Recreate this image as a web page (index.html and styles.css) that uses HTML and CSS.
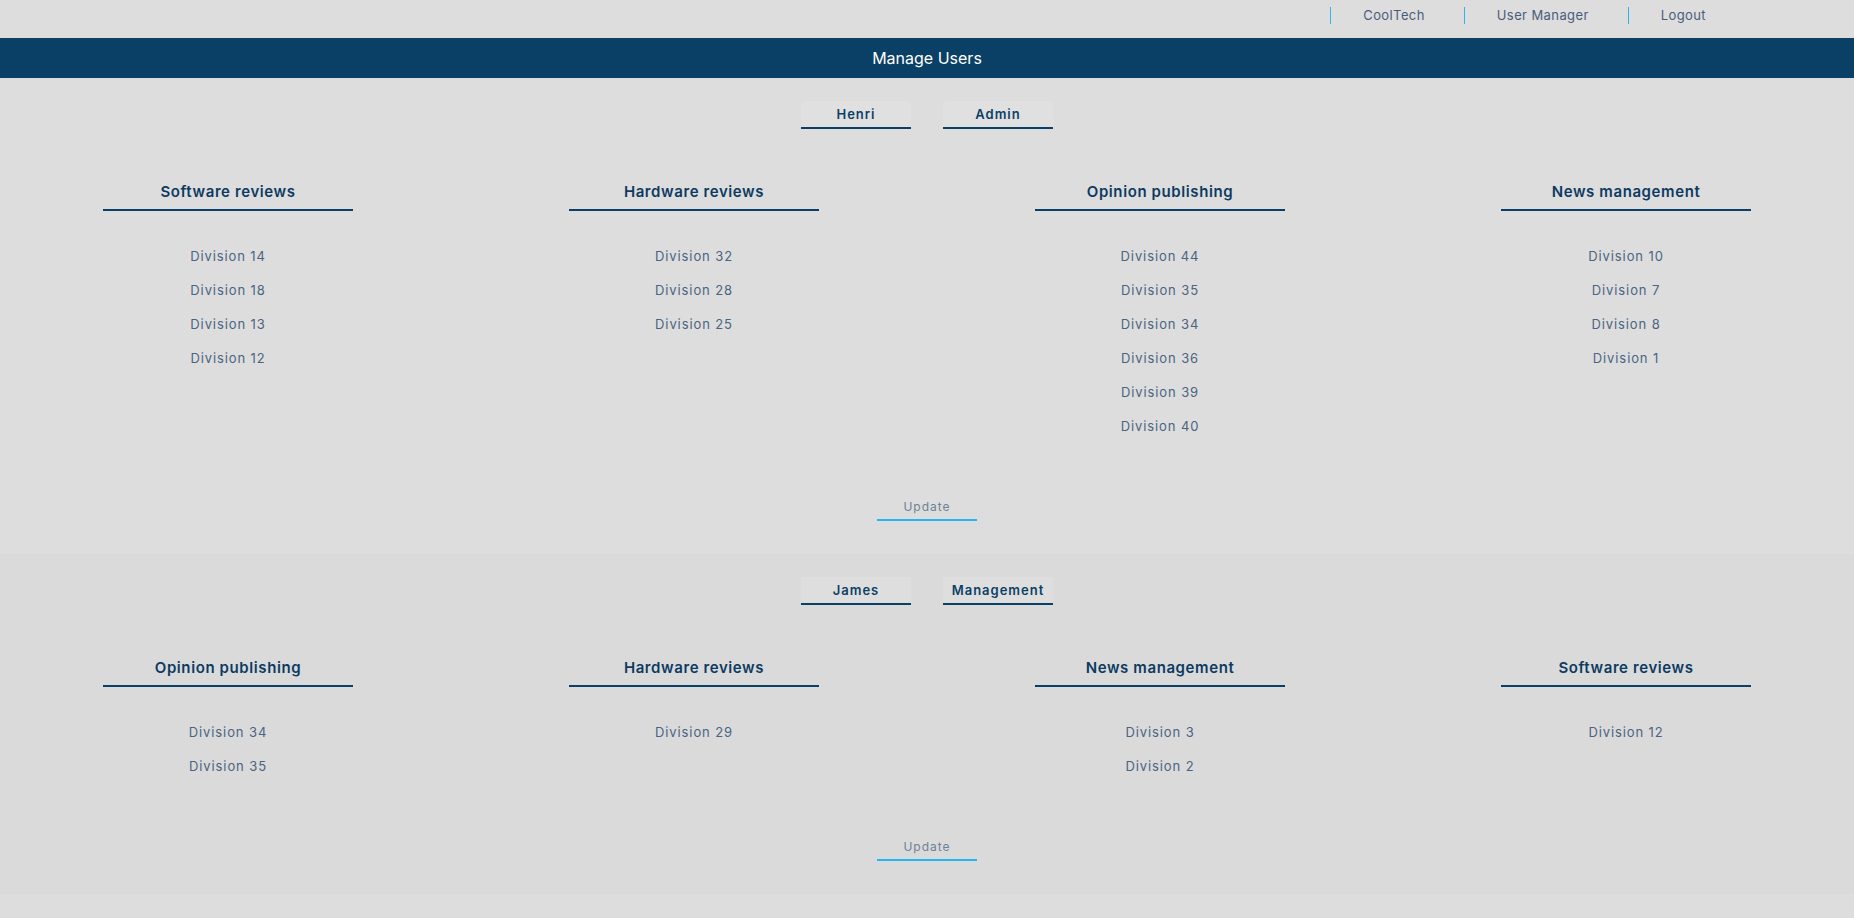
FILE: index.html
```html
<!DOCTYPE html>
<html lang="en">
<head>
<meta charset="utf-8">
<title>Manage Users</title>
<link rel="stylesheet" href="styles.css">
</head>
<body>
<nav class="topnav">
  <a class="nav-item">CoolTech</a>
  <a class="nav-item">User Manager</a>
  <a class="nav-item">Logout</a>
</nav>
<header class="titlebar">Manage Users</header>

<section class="user-card">
  <div class="user-tags">
    <span class="tag">Henri</span>
    <span class="tag">Admin</span>
  </div>
  <div class="groups">
    <div class="group">
      <h3 class="group-title">Software reviews</h3>
      <ul class="divisions">
        <li>Division 14</li><li>Division 18</li><li>Division 13</li><li>Division 12</li>
      </ul>
    </div>
    <div class="group">
      <h3 class="group-title">Hardware reviews</h3>
      <ul class="divisions">
        <li>Division 32</li><li>Division 28</li><li>Division 25</li>
      </ul>
    </div>
    <div class="group">
      <h3 class="group-title">Opinion publishing</h3>
      <ul class="divisions">
        <li>Division 44</li><li>Division 35</li><li>Division 34</li><li>Division 36</li><li>Division 39</li><li>Division 40</li>
      </ul>
    </div>
    <div class="group">
      <h3 class="group-title">News management</h3>
      <ul class="divisions">
        <li>Division 10</li><li>Division 7</li><li>Division 8</li><li>Division 1</li>
      </ul>
    </div>
  </div>
  <div class="actions"><button class="update">Update</button></div>
</section>

<section class="user-card alt">
  <div class="user-tags">
    <span class="tag">James</span>
    <span class="tag">Management</span>
  </div>
  <div class="groups">
    <div class="group">
      <h3 class="group-title">Opinion publishing</h3>
      <ul class="divisions">
        <li>Division 34</li><li>Division 35</li>
      </ul>
    </div>
    <div class="group">
      <h3 class="group-title">Hardware reviews</h3>
      <ul class="divisions">
        <li>Division 29</li>
      </ul>
    </div>
    <div class="group">
      <h3 class="group-title">News management</h3>
      <ul class="divisions">
        <li>Division 3</li><li>Division 2</li>
      </ul>
    </div>
    <div class="group">
      <h3 class="group-title">Software reviews</h3>
      <ul class="divisions">
        <li>Division 12</li>
      </ul>
    </div>
  </div>
  <div class="actions"><button class="update">Update</button></div>
</section>
</body>
</html>
```

FILE: styles.css
```css
* { box-sizing: border-box; }

body {
  margin: 0;
  background: #dddddd;
  font-family: Inter, "Noto Sans", "DejaVu Sans", sans-serif;
  color: #0b3f66;
}

.topnav {
  height: 38px;
  display: flex;
  justify-content: flex-end;
  align-items: flex-start;
  padding: 7px 109px 0 0;
}

.nav-item {
  display: block;
  border-left: 1px solid #2bb5ea;
  height: 17px;
  line-height: 17px;
  padding: 0 39px 0 32px;
  font-size: 13px;
  letter-spacing: 0.4px;
  color: #4a5c7c;
}

.titlebar {
  height: 40px;
  line-height: 40px;
  background: #0b4066;
  color: #ffffff;
  text-align: center;
  font-size: 16px;
}

.user-card {
  padding: 23px 0 33px;
  background: #dddddd;
}

.user-card.alt {
  background: #dadada;
}

.user-tags {
  display: flex;
  justify-content: center;
  gap: 32px;
}

.tag {
  width: 110px;
  height: 28px;
  line-height: 27px;
  text-align: center;
  background: #e0e0e0;
  border-bottom: 2px solid #0b4066;
  border-radius: 2px 2px 0 0;
  font-size: 13px;
  font-weight: 600;
  letter-spacing: 1px;
  color: #0b3f66;
}

.alt .tag { background: #dedede; }

.groups {
  display: flex;
  justify-content: space-between;
  padding: 0 103px;
  margin-top: 53px;
}

.group {
  width: 250px;
  text-align: center;
}

.group-title {
  margin: 0;
  font-size: 15px;
  line-height: 20px;
  font-weight: 600;
  letter-spacing: 0.6px;
  color: #0d3a62;
  padding-bottom: 7px;
  border-bottom: 2px solid #0b4066;
}

.divisions {
  list-style: none;
  margin: 28px 0 0;
  padding: 0;
}

.divisions li {
  height: 34px;
  line-height: 34px;
  font-size: 13px;
  letter-spacing: 0.9px;
  color: #4a6482;
}

.actions {
  display: flex;
  justify-content: center;
  margin-top: 56px;
}

.update {
  width: 100px;
  padding: 0 0 4px;
  background: transparent;
  border: 0;
  border-bottom: 2px solid #22b8ef;
  font-family: inherit;
  font-size: 12px;
  line-height: 16px;
  letter-spacing: 1px;
  color: #6f8196;
}
```
